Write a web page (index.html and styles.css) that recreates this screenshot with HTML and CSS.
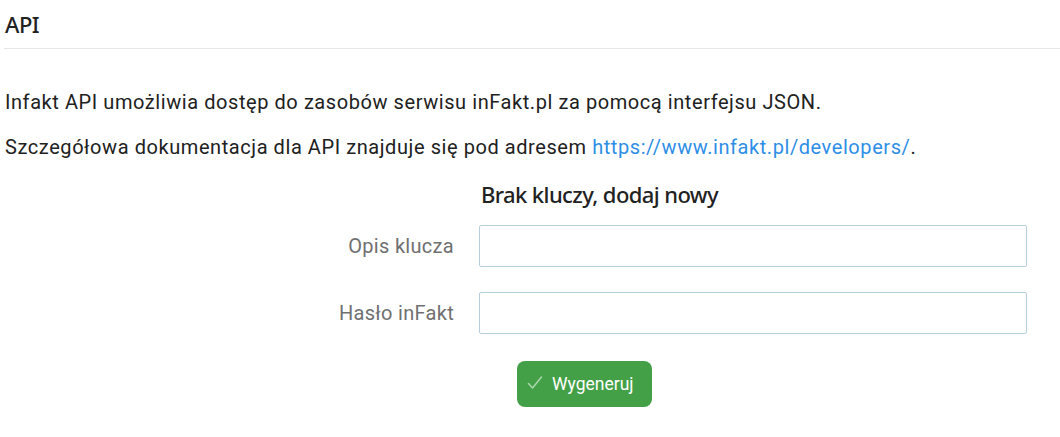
FILE: index.html
```html
<!DOCTYPE html>
<html lang="pl">
<head>
<meta charset="utf-8">
<link rel="stylesheet" href="styles.css">
</head>
<body>
<div class="page">
  <h1 class="title">API</h1>
  <p class="text">Infakt API umożliwia dostęp do zasobów serwisu inFakt.pl za pomocą interfejsu JSON.</p>
  <p class="text">Szczegółowa dokumentacja dla API znajduje się pod adresem <a class="link" href="#">https://www.infakt.pl/developers/</a>.</p>
  <form class="form">
    <div class="spacer"></div>
    <h2 class="subtitle">Brak kluczy, dodaj nowy</h2>
    <label class="label" for="opis">Opis klucza</label>
    <input class="input" id="opis" type="text">
    <label class="label" for="haslo">Hasło inFakt</label>
    <input class="input" id="haslo" type="password">
    <div class="spacer"></div>
    <div class="actions">
      <button class="btn" type="button"><svg class="check" width="16" height="16" viewBox="0 0 16 16"><path d="M1.5 8.5 L5.5 13 L14.5 2" fill="none" stroke="#a8d5aa" stroke-width="1.6" stroke-linecap="round" stroke-linejoin="round"/></svg>Wygeneruj</button>
    </div>
  </form>
</div>
</body>
</html>
```

FILE: styles.css
```css
html, body {
  margin: 0;
  padding: 0;
  background: #fff;
}
.page {
  padding-left: 4px;
  font-family: Roboto, "Liberation Sans", sans-serif;
  color: #212121;
}
.title {
  margin: 0;
  font-family: "Noto Sans", "Open Sans", sans-serif;
  font-weight: 500;
  font-size: 22px;
  line-height: 24px;
  padding: 12px 0 12px 1px;
  border-bottom: 1px solid #e6e6e6;
  color: #222;
  letter-spacing: -0.5px;
}
.text {
  margin: 0;
  font-size: 20px;
  line-height: 24px;
  letter-spacing: 0.57px;
  padding-left: 1px;
}
.text:first-of-type {
  margin-top: 41px;
}
.text + .text {
  margin-top: 21px;
}
.link {
  color: #2e8ee6;
  text-decoration: none;
}
.form {
  display: grid;
  grid-template-columns: 450px 548px;
  column-gap: 25px;
  align-items: center;
  margin-top: 20px;
}
.subtitle {
  margin: 0 0 16px 2px;
  font-family: "Noto Sans", "Open Sans", sans-serif;
  font-weight: 500;
  font-size: 22px;
  line-height: 30px;
  color: #222;
  letter-spacing: -0.6px;
}
.label {
  text-align: right;
  font-size: 20px;
  letter-spacing: 0.3px;
  color: #707070;
  margin-bottom: 25px;
}
.input {
  box-sizing: border-box;
  height: 42px;
  border: 1px solid #b5cfdc;
  border-radius: 2px;
  margin-bottom: 25px;
  font-size: 16px;
  padding: 0 10px;
  outline: none;
}
.actions {
  padding-left: 38px;
}
.btn {
  display: inline-flex;
  align-items: center;
  gap: 9px;
  height: 46px;
  padding: 0 18px 0 10px;
  margin-top: 2px;
  border: 0;
  border-radius: 8px;
  background: #43a047;
  color: #fff;
  font-family: Roboto, "Liberation Sans", sans-serif;
  font-size: 17.5px;
}
.check {
  display: block;
  margin-bottom: 2px;
}
```
